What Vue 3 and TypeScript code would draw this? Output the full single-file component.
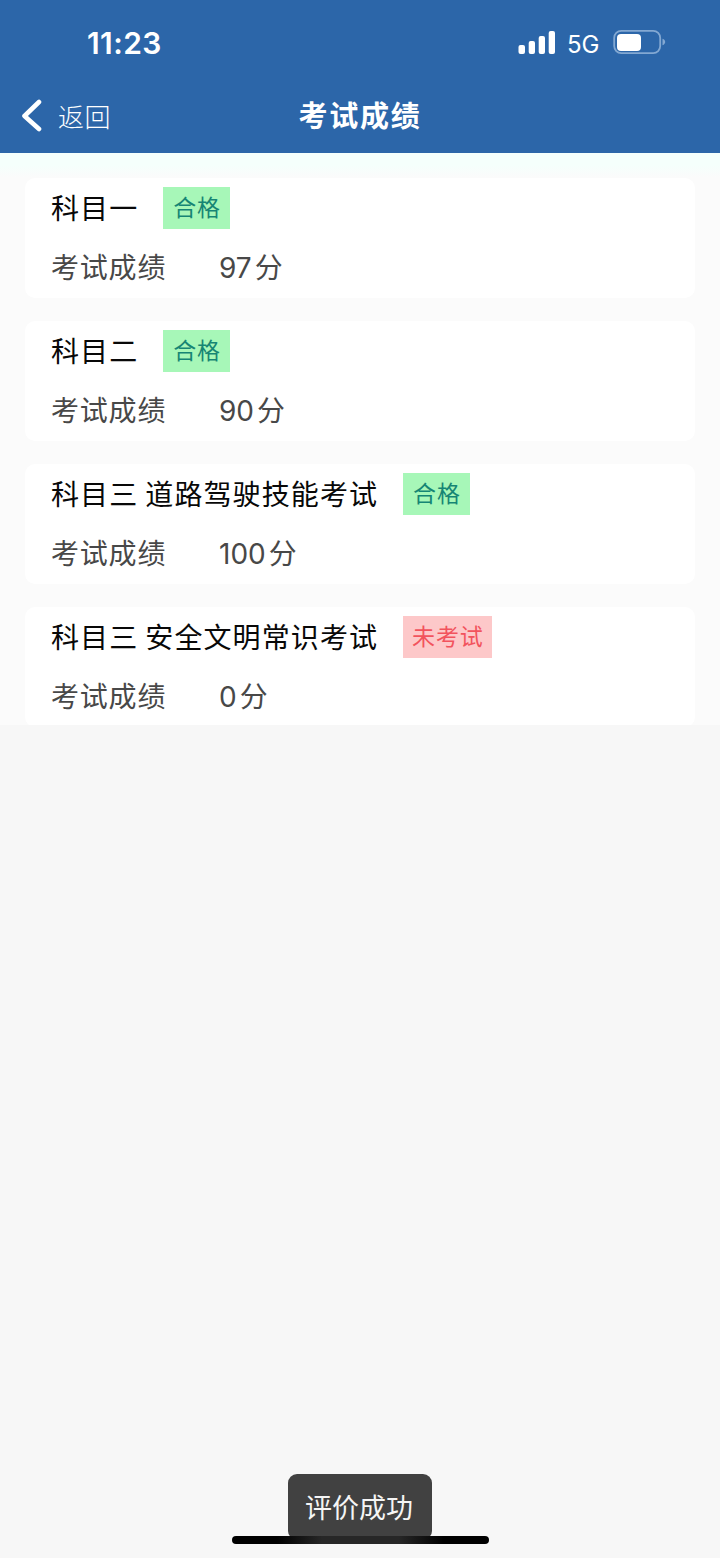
<script setup lang="ts">
interface Result {
  subject: string
  status: string
  passed: boolean
  score: number
}

const results: Result[] = [
  { subject: '科目一', status: '合格', passed: true, score: 97 },
  { subject: '科目二', status: '合格', passed: true, score: 90 },
  { subject: '科目三 道路驾驶技能考试', status: '合格', passed: true, score: 100 },
  { subject: '科目三 安全文明常识考试', status: '未考试', passed: false, score: 0 },
]
</script>

<template>
  <div class="screen">
    <header class="header">
      <div class="status-bar">
        <span class="time">11:23</span>
        <div class="indicators">
          <svg class="signal" width="38" height="24" viewBox="0 0 38 24" fill="#fff">
            <rect x="0.5" y="14" width="6.5" height="9" rx="2" />
            <rect x="10.7" y="10" width="6.3" height="13" rx="2" />
            <rect x="20.7" y="5" width="6.3" height="18" rx="2" />
            <rect x="30.7" y="0" width="6.3" height="23" rx="2" />
          </svg>
          <span class="network">5G</span>
          <svg class="battery" width="54" height="26" viewBox="0 0 54 26">
            <rect x="1.2" y="1.9" width="46" height="22.2" rx="7" fill="none" stroke="#83a8d2" stroke-width="1.8" />
            <rect x="4" y="5" width="24" height="17" rx="4" fill="#fff" />
            <path d="M49.500 9.800c3.600 1 3.600 5.400 0 6.400z" fill="#83a8d2" />
          </svg>
        </div>
      </div>
      <nav class="nav">
        <div class="back">
          <svg width="22" height="34" viewBox="0 0 22 34" fill="none" stroke="#fff" stroke-width="4.6" stroke-linecap="round" stroke-linejoin="round">
            <path d="M19 3L4.500 17l14.500 13" />
          </svg>
          <span class="back-label">返回</span>
        </div>
        <h1 class="title">考试成绩</h1>
      </nav>
    </header>

    <main class="list">
      <section v-for="item in results" :key="item.subject" class="card">
        <div class="subject-row">
          <span class="subject">{{ item.subject }}</span>
          <span class="tag" :class="item.passed ? 'tag-pass' : 'tag-pending'">{{ item.status }}</span>
        </div>
        <div class="score-row">
          <span class="score-label">考试成绩</span>
          <span class="score">{{ item.score }}</span>
          <span class="unit">分</span>
        </div>
      </section>
    </main>

    <div class="toast">评价成功</div>
    <div class="home-indicator"></div>
  </div>
</template>

<style>
body {
  margin: 0;
  background: #f7f7f7;
}
</style>

<style scoped>
.screen {
  position: relative;
  width: 720px;
  height: 1558px;
  overflow: hidden;
  background: #f7f7f7;
  font-family: Inter, "Noto Sans CJK SC", sans-serif;
}
.header {
  height: 153px;
  background: #2c66a9;
  color: #fff;
}
.status-bar {
  display: flex;
  justify-content: space-between;
  height: 80px;
  padding: 0 53px 0 87px;
}
.time {
  margin-top: 23px;
  font-size: 30px;
  line-height: 40px;
  font-weight: 600;
  letter-spacing: 0.4px;
}
.indicators {
  display: flex;
  align-items: flex-start;
}
.signal {
  margin-top: 31px;
}
.network {
  width: 33px;
  margin: 25px 13px 0 11px;
  font-size: 24px;
  line-height: 40px;
  white-space: nowrap;
}
.battery {
  margin-top: 29px;
}
.nav {
  display: grid;
  grid-template-columns: 1fr auto 1fr;
  height: 73px;
}
.back {
  display: flex;
  padding-left: 20px;
}
.back svg {
  margin-top: 19px;
}
.back-label {
  margin: 18px 0 0 16px;
  font-size: 26px;
  line-height: 40px;
  font-weight: 300;
  letter-spacing: 0.4px;
}
.title {
  margin: 17px 0 0;
  font-size: 29px;
  line-height: 40px;
  font-weight: 600;
  letter-spacing: 1.8px;
}
.list {
  display: flex;
  flex-direction: column;
  gap: 23px;
  box-sizing: border-box;
  height: 572px;
  padding: 25px 25px 0;
  overflow: hidden;
  background: linear-gradient(#f5fffc 0, #f5fffc 12px, #fbfbfb 24px);
}
.card {
  flex: none;
  box-sizing: border-box;
  height: 120px;
  padding: 8px 26px 0;
  border-radius: 10px;
  background: #fff;
}
.subject-row {
  display: flex;
  align-items: center;
  height: 43px;
}
.subject {
  padding-top: 2px;
  color: #080808;
  font-size: 28px;
  line-height: 42px;
  letter-spacing: 1.1px;
  word-spacing: -2px;
  white-space: pre;
}
.tag {
  box-sizing: border-box;
  height: 42px;
  margin-left: 25px;
  padding: 0 9.500px 0 10px;
  font-size: 23px;
  line-height: 42px;
  letter-spacing: 0.8px;
}
.tag-pass {
  background: #a7f7b8;
  color: #168574;
}
.tag-pending {
  padding: 0 9px;
  background: #fdc8c9;
  color: #f2535d;
}
.score-row {
  display: flex;
  height: 42px;
  margin-top: 18px;
  color: #484848;
  font-size: 28px;
  line-height: 42px;
}
.score-label {
  width: 168px;
  letter-spacing: 0.8px;
}
.unit {
  margin-left: 3px;
}
.toast {
  position: absolute;
  left: 288px;
  top: 1474px;
  width: 144px;
  height: 66px;
  box-sizing: border-box;
  padding-right: 2px;
  border-radius: 9px;
  background: #414141;
  color: #f5f5f5;
  font-size: 27px;
  line-height: 70px;
  text-align: center;
}
.home-indicator {
  position: absolute;
  left: 232px;
  top: 1536px;
  width: 257px;
  height: 8px;
  border-radius: 4px;
  background: linear-gradient(90deg, #000 45px, #272727 90px, #272727 167px, #000 212px);
}
</style>
